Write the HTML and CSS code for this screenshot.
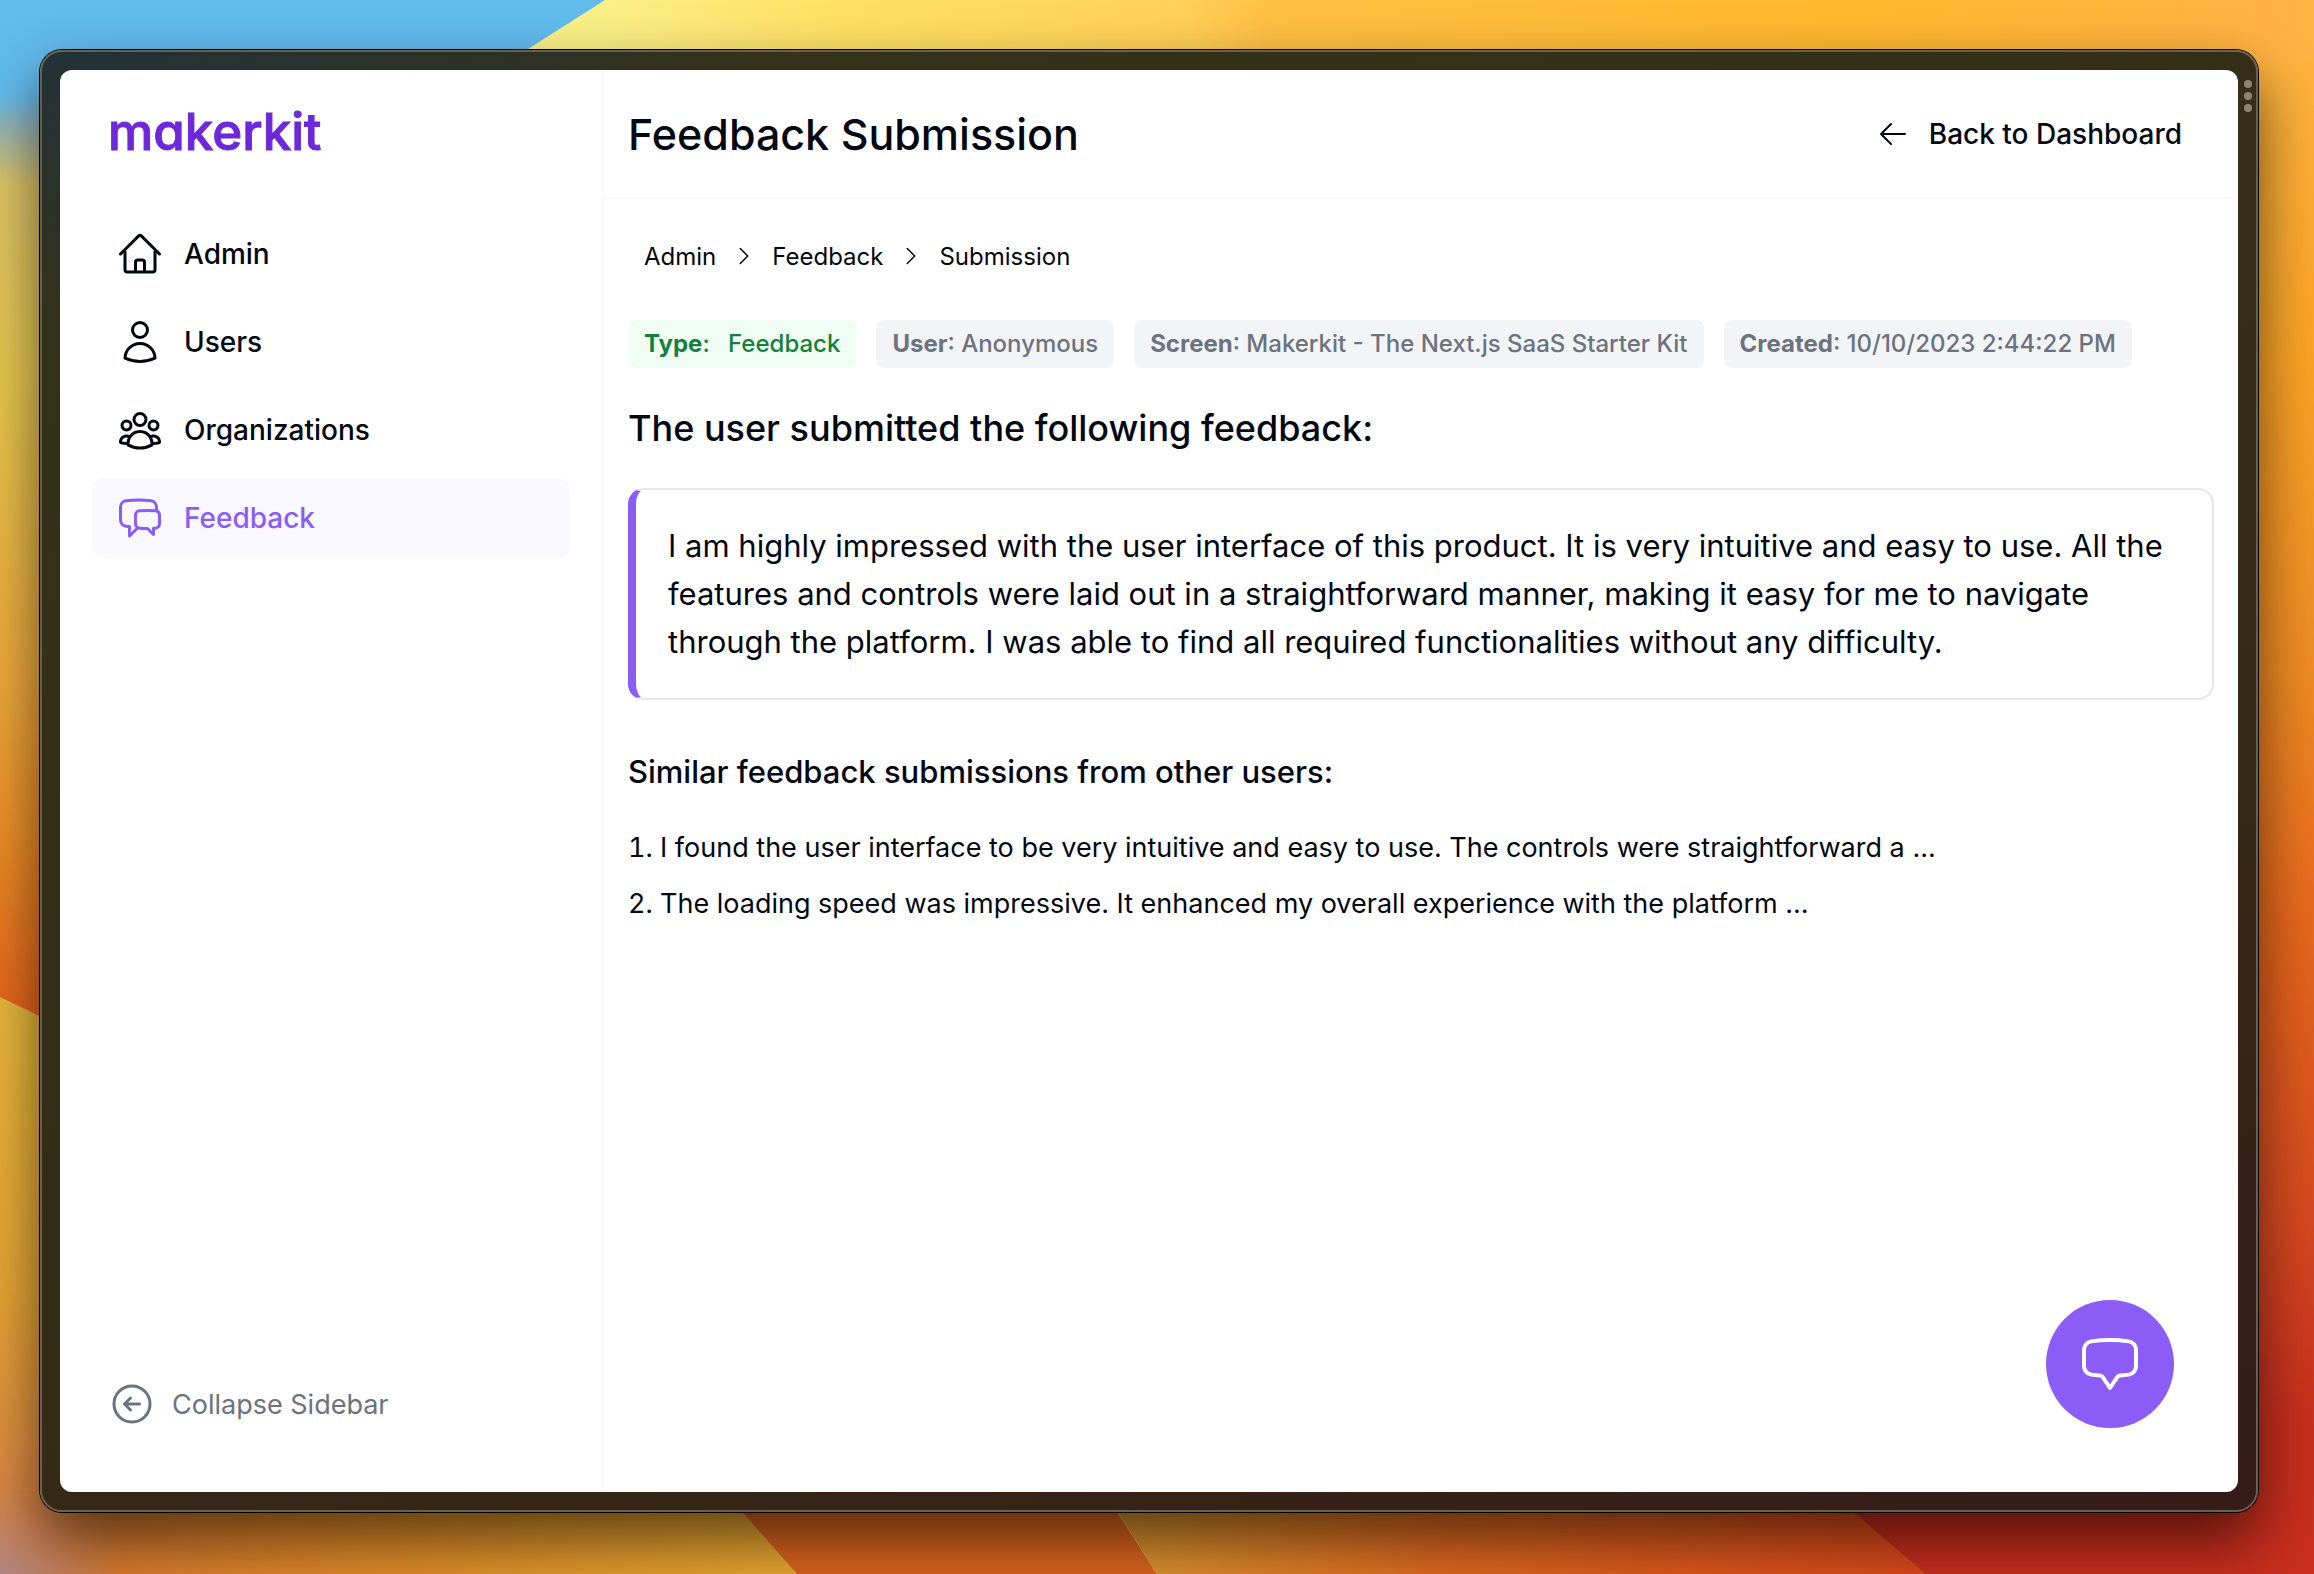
FILE: index.html
```
<!DOCTYPE html>
<html lang="en">
<head>
  <meta charset="UTF-8">
  <meta name="viewport" content="width=device-width, initial-scale=1.0">
  <title>Feedback Submission - Makerkit</title>
  <link rel="stylesheet" href="styles.css">
</head>
<body>

  <!-- Desktop wallpaper -->
  <svg class="wallpaper" viewBox="0 0 2314 1574" preserveAspectRatio="none" aria-hidden="true">
    <defs>
      <linearGradient id="left" x1="0" y1="0" x2="0" y2="1">
        <stop offset="0.01" stop-color="#62bbec"/>
        <stop offset="0.03" stop-color="#93b5b8"/>
        <stop offset="0.07" stop-color="#dfc567"/>
        <stop offset="0.2" stop-color="#e8c850"/>
        <stop offset="0.4" stop-color="#eeaa3c"/>
        <stop offset="0.5" stop-color="#ec9028"/>
        <stop offset="0.62" stop-color="#e8661c"/>
      </linearGradient>
      <linearGradient id="top" x1="0" y1="0" x2="1" y2="0">
        <stop offset="0.26" stop-color="#fbf086"/>
        <stop offset="0.36" stop-color="#ffe066"/>
        <stop offset="0.51" stop-color="#ffd158"/>
        <stop offset="0.55" stop-color="#ffbf42"/>
        <stop offset="0.8" stop-color="#ffb82f"/>
        <stop offset="1" stop-color="#ffb245"/>
      </linearGradient>
      <linearGradient id="right" x1="0" y1="0" x2="0" y2="1">
        <stop offset="0" stop-color="#ffb33e"/>
        <stop offset="0.2" stop-color="#fba424"/>
        <stop offset="0.4" stop-color="#f08c24"/>
        <stop offset="0.57" stop-color="#e8681c"/>
        <stop offset="0.76" stop-color="#d84a20"/>
        <stop offset="0.9" stop-color="#c82e1e"/>
      </linearGradient>
      <linearGradient id="corner" x1="0" y1="0" x2="0" y2="1">
        <stop offset="0" stop-color="#eab83c"/>
        <stop offset="0.5" stop-color="#e6a634"/>
        <stop offset="0.85" stop-color="#dc8844"/>
        <stop offset="1" stop-color="#b08484"/>
      </linearGradient>
      <linearGradient id="bottom-left" x1="0" y1="0" x2="1" y2="0">
        <stop offset="0" stop-color="#d87a34" stop-opacity="0"/>
        <stop offset="0.15" stop-color="#da7c30"/>
        <stop offset="0.4" stop-color="#e08828"/>
        <stop offset="1" stop-color="#e8a830"/>
      </linearGradient>
      <linearGradient id="bottom-right" x1="0" y1="0" x2="1" y2="0">
        <stop offset="0" stop-color="#dc9830"/>
        <stop offset="0.4" stop-color="#e06a20"/>
        <stop offset="1" stop-color="#dc481a"/>
      </linearGradient>
    </defs>
    <rect width="2314" height="1574" fill="url(#top)"/>
    <rect x="1500" y="60" width="814" height="1514" fill="url(#right)"/>
    <polygon points="0,0 605,0 528,49 400,120 0,120" fill="#62bbec"/>
    <rect y="80" width="400" height="1494" fill="url(#left)"/>
    <polygon points="0,997 400,1190 400,1574 0,1574" fill="url(#corner)"/>
    <polygon points="0,1490 730,1490 797,1574 0,1574" fill="url(#bottom-left)"/>
    <polygon points="714,1480 1090,1470 1157,1574 797,1574" fill="#dc641e"/>
    <polygon points="1104,1490 1828,1490 1926,1574 1157,1574" fill="url(#bottom-right)"/>
    <polygon points="1828,1490 2200,1490 2200,1574 1926,1574" fill="#c82e1e"/>
  </svg>

  <div class="window">
    <div class="window-dots"><span></span><span></span><span></span></div>

    <div class="app">
      <aside class="sidebar">
        <a class="logo" href="#">makerkit</a>

        <nav class="menu">
          <a class="menu-item" href="#">
            <svg class="icon" viewBox="0 0 24 24"><path d="M2.25 12l8.954-8.955c.44-.439 1.152-.439 1.591 0L21.75 12M4.5 9.75v10.125c0 .621.504 1.125 1.125 1.125H9.75v-4.875c0-.621.504-1.125 1.125-1.125h2.25c.621 0 1.125.504 1.125 1.125V21h4.125c.621 0 1.125-.504 1.125-1.125V9.75M8.25 21h8.25"/></svg>
            Admin
          </a>
          <a class="menu-item" href="#">
            <svg class="icon" viewBox="0 0 24 24"><path d="M15.75 6a3.75 3.75 0 11-7.5 0 3.75 3.75 0 017.5 0zM4.501 20.118a7.5 7.5 0 0114.998 0A17.933 17.933 0 0112 21.75c-2.676 0-5.216-.584-7.499-1.632z"/></svg>
            Users
          </a>
          <a class="menu-item" href="#">
            <svg class="icon" viewBox="0 0 24 24"><path d="M18 18.72a9.094 9.094 0 003.741-.479 3 3 0 00-4.682-2.72m.94 3.198l.001.031c0 .225-.012.447-.037.666A11.944 11.944 0 0112 21c-2.17 0-4.207-.576-5.963-1.584A6.062 6.062 0 016 18.719m12 0a5.971 5.971 0 00-.941-3.197m0 0A5.995 5.995 0 0012 12.75a5.995 5.995 0 00-5.058 2.772m0 0a3 3 0 00-4.681 2.72 8.986 8.986 0 003.74.477m.94-3.197a5.971 5.971 0 00-.94 3.197M15 6.75a3 3 0 11-6 0 3 3 0 016 0zm6 3a2.25 2.25 0 11-4.5 0 2.25 2.25 0 014.5 0zm-13.5 0a2.25 2.25 0 11-4.5 0 2.25 2.25 0 014.5 0z"/></svg>
            Organizations
          </a>
          <a class="menu-item active" href="#">
            <svg class="icon" viewBox="0 0 24 24"><path d="M20.25 8.511c.884.284 1.5 1.128 1.5 2.097v4.286c0 1.136-.847 2.1-1.98 2.193-.34.027-.68.052-1.02.072v3.091l-3-3c-1.354 0-2.694-.055-4.02-.163a2.115 2.115 0 01-.825-.242m9.345-8.334a2.126 2.126 0 00-.476-.095 48.64 48.64 0 00-8.048 0c-1.131.094-1.976 1.057-1.976 2.192v4.286c0 .837.46 1.58 1.155 1.951m9.345-8.334V6.637c0-1.621-1.152-3.026-2.76-3.235A48.455 48.455 0 0011.25 3c-2.115 0-4.198.137-6.24.402-1.608.209-2.76 1.614-2.76 3.235v6.226c0 1.621 1.152 3.026 2.76 3.235.577.075 1.157.14 1.74.194V21l4.155-4.155"/></svg>
            Feedback
          </a>
        </nav>

        <button class="collapse" type="button">
          <svg class="icon" viewBox="0 0 24 24"><path d="M11.25 9l-3 3m0 0l3 3m-3-3h7.5M21 12a9 9 0 11-18 0 9 9 0 0118 0z"/></svg>
          Collapse Sidebar
        </button>
      </aside>

      <main class="main">
        <header class="header">
          <h1>Feedback Submission</h1>
          <a class="back" href="#">
            <svg class="icon" viewBox="0 0 24 24"><path d="M10.5 19.5L3 12m0 0l7.5-7.5M3 12h18"/></svg>
            Back to Dashboard
          </a>
        </header>

        <div class="content">
          <nav class="breadcrumb">
            <a href="#">Admin</a>
            <svg class="icon" viewBox="0 0 24 24"><path d="M8.25 4.5l7.5 7.5-7.5 7.5"/></svg>
            <a href="#">Feedback</a>
            <svg class="icon" viewBox="0 0 24 24"><path d="M8.25 4.5l7.5 7.5-7.5 7.5"/></svg>
            <span>Submission</span>
          </nav>

          <div class="badges">
            <span class="badge success"><b>Type</b>: <span class="value">Feedback</span></span>
            <span class="badge"><b>User</b>: Anonymous</span>
            <span class="badge"><b>Screen</b>: Makerkit - The Next.js SaaS Starter Kit</span>
            <span class="badge"><b>Created</b>: 10/10/2023 2:44:22 PM</span>
          </div>

          <h2>The user submitted the following feedback:</h2>

          <blockquote class="quote">I am highly impressed with the user interface of this product. It is very intuitive and easy to use. All the features and controls were laid out in a straightforward manner, making it easy for me to navigate through the platform. I was able to find all required functionalities without any difficulty.</blockquote>

          <h3>Similar feedback submissions from other users:</h3>

          <ol class="similar">
            <li><a href="#">I found the user interface to be very intuitive and easy to use. The controls were straightforward a ...</a></li>
            <li><a href="#">The loading speed was impressive. It enhanced my overall experience with the platform ...</a></li>
          </ol>
        </div>
      </main>

      <button class="chat-button" type="button" aria-label="Send feedback">
        <svg class="icon" viewBox="0 0 24 24"><path d="M2.25 12.76c0 1.6 1.123 2.994 2.707 3.227 1.068.157 2.148.279 3.238.364.466.037.893.281 1.153.671L12 21l2.652-3.978c.26-.39.687-.634 1.153-.67 1.09-.086 2.17-.208 3.238-.365 1.584-.233 2.707-1.626 2.707-3.228V6.741c0-1.602-1.123-2.995-2.707-3.228A48.394 48.394 0 0012 3c-2.392 0-4.744.175-7.043.513C3.373 3.746 2.25 5.14 2.25 6.741v6.018z"/></svg>
      </button>
    </div>
  </div>

</body>
</html>
```
FILE: styles.css
```
* {
  box-sizing: border-box;
}
body {
  margin: 0;
  height: 100vh;
  padding: 50px 56px 62px 40px;
  font-family: Inter, "Liberation Sans", sans-serif;
  font-size: 28px;
  color: #030712;
}
a {
  color: inherit;
  text-decoration: none;
}
button {
  font: inherit;
  border: none;
  background: none;
  padding: 0;
  cursor: pointer;
}
h1, h2, h3, ol, blockquote {
  margin: 0;
  padding: 0;
  font-weight: 500;
}
.wallpaper {
  position: absolute;
  inset: 0;
  width: 100%;
  height: 100%;
  z-index: -1;
}
.icon {
  width: 48px;
  height: 48px;
  flex-shrink: 0;
  fill: none;
  stroke: currentColor;
  stroke-width: 1.5;
  stroke-linecap: round;
  stroke-linejoin: round;
}

/* Window frame */
.window {
  position: relative;
  height: 100%;
  padding: 18px;
  border: 2px solid #6b604a;
  border-radius: 22px;
  background: linear-gradient(160deg, #22323a 0%, #33311a 12%, #352b16 60%, #351c18 100%);
  box-shadow: 0 0 0 1px #000, 0 28px 60px rgba(0, 0, 0, 0.6);
}
.window-dots {
  position: absolute;
  top: 28px;
  right: 4px;
  display: grid;
  gap: 4px;
}
.window-dots span {
  width: 8px;
  height: 8px;
  border-radius: 50%;
  background: #8c8470;
}
.app {
  position: relative;
  display: flex;
  height: 100%;
  background: #fff;
  border-radius: 12px;
  overflow: hidden;
}

/* Sidebar */
.sidebar {
  display: flex;
  flex-direction: column;
  width: 544px;
  padding: 32px;
  border-right: 2px solid #f9fafb;
}
.logo {
  padding-left: 16px;
  font-size: 51px;
  line-height: 60px;
  font-weight: 500;
  font-feature-settings: "cv11";
  -webkit-text-stroke: 1px #6d28d9;
  color: #6d28d9;
}
.menu {
  display: grid;
  gap: 8px;
  margin-top: 52px;
}
.menu-item {
  display: flex;
  align-items: center;
  gap: 20px;
  height: 80px;
  padding: 0 24px;
  border-radius: 12px;
  font-weight: 500;
}
.menu-item.active {
  background: #f9f8ff;
  color: #8b5cf6;
}
.collapse {
  display: flex;
  align-items: center;
  gap: 16px;
  margin: auto 0 32px;
  padding-left: 16px;
  font-size: 27px;
  color: #6b7280;
}

/* Main column */
.main {
  flex: 1;
}
.header {
  display: flex;
  align-items: center;
  justify-content: space-between;
  height: 129px;
  padding: 0 56px 0 24px;
  border-bottom: 2px solid #f9fafb;
}
h1 {
  font-size: 43px;
}
.back {
  display: flex;
  align-items: center;
  gap: 20px;
  font-weight: 500;
}
.back .icon {
  width: 32px;
  height: 32px;
}
.content {
  padding: 33px 24px;
}
.breadcrumb {
  display: flex;
  align-items: center;
  gap: 16px;
  height: 48px;
  padding-left: 16px;
  font-size: 24px;
}
.breadcrumb .icon {
  width: 24px;
  height: 24px;
}
.badges {
  display: flex;
  gap: 20px;
  margin-top: 40px;
}
.badge {
  padding: 0 16px;
  border-radius: 8px;
  background: #f3f4f6;
  color: #6b7280;
  font-size: 24px;
  font-weight: 500;
  line-height: 48px;
  white-space: nowrap;
}
.badge b {
  font-weight: 700;
}
.badge.success {
  background: #f0fdf4;
  color: #15803d;
}
.badge .value {
  margin-left: 12px;
}
h2 {
  margin-top: 36px;
  font-size: 36px;
  line-height: 48px;
}
.quote {
  margin-top: 36px;
  padding: 32px;
  border: 2px solid #e5e7eb;
  border-left: 8px solid #8b5cf6;
  border-radius: 16px;
  font-size: 31px;
  line-height: 48px;
  font-weight: 400;
}
h3 {
  margin-top: 48px;
  font-size: 31px;
  line-height: 48px;
}
.similar {
  margin-top: 24px;
  font-size: 27px;
  line-height: 56px;
  font-weight: 400;
  list-style-position: inside;
}

.chat-button {
  position: absolute;
  right: 64px;
  bottom: 64px;
  display: flex;
  align-items: center;
  justify-content: center;
  width: 128px;
  height: 128px;
  border-radius: 50%;
  background: #8b5cf6;
  color: #fff;
}
.chat-button .icon {
  width: 64px;
  height: 64px;
}
```
